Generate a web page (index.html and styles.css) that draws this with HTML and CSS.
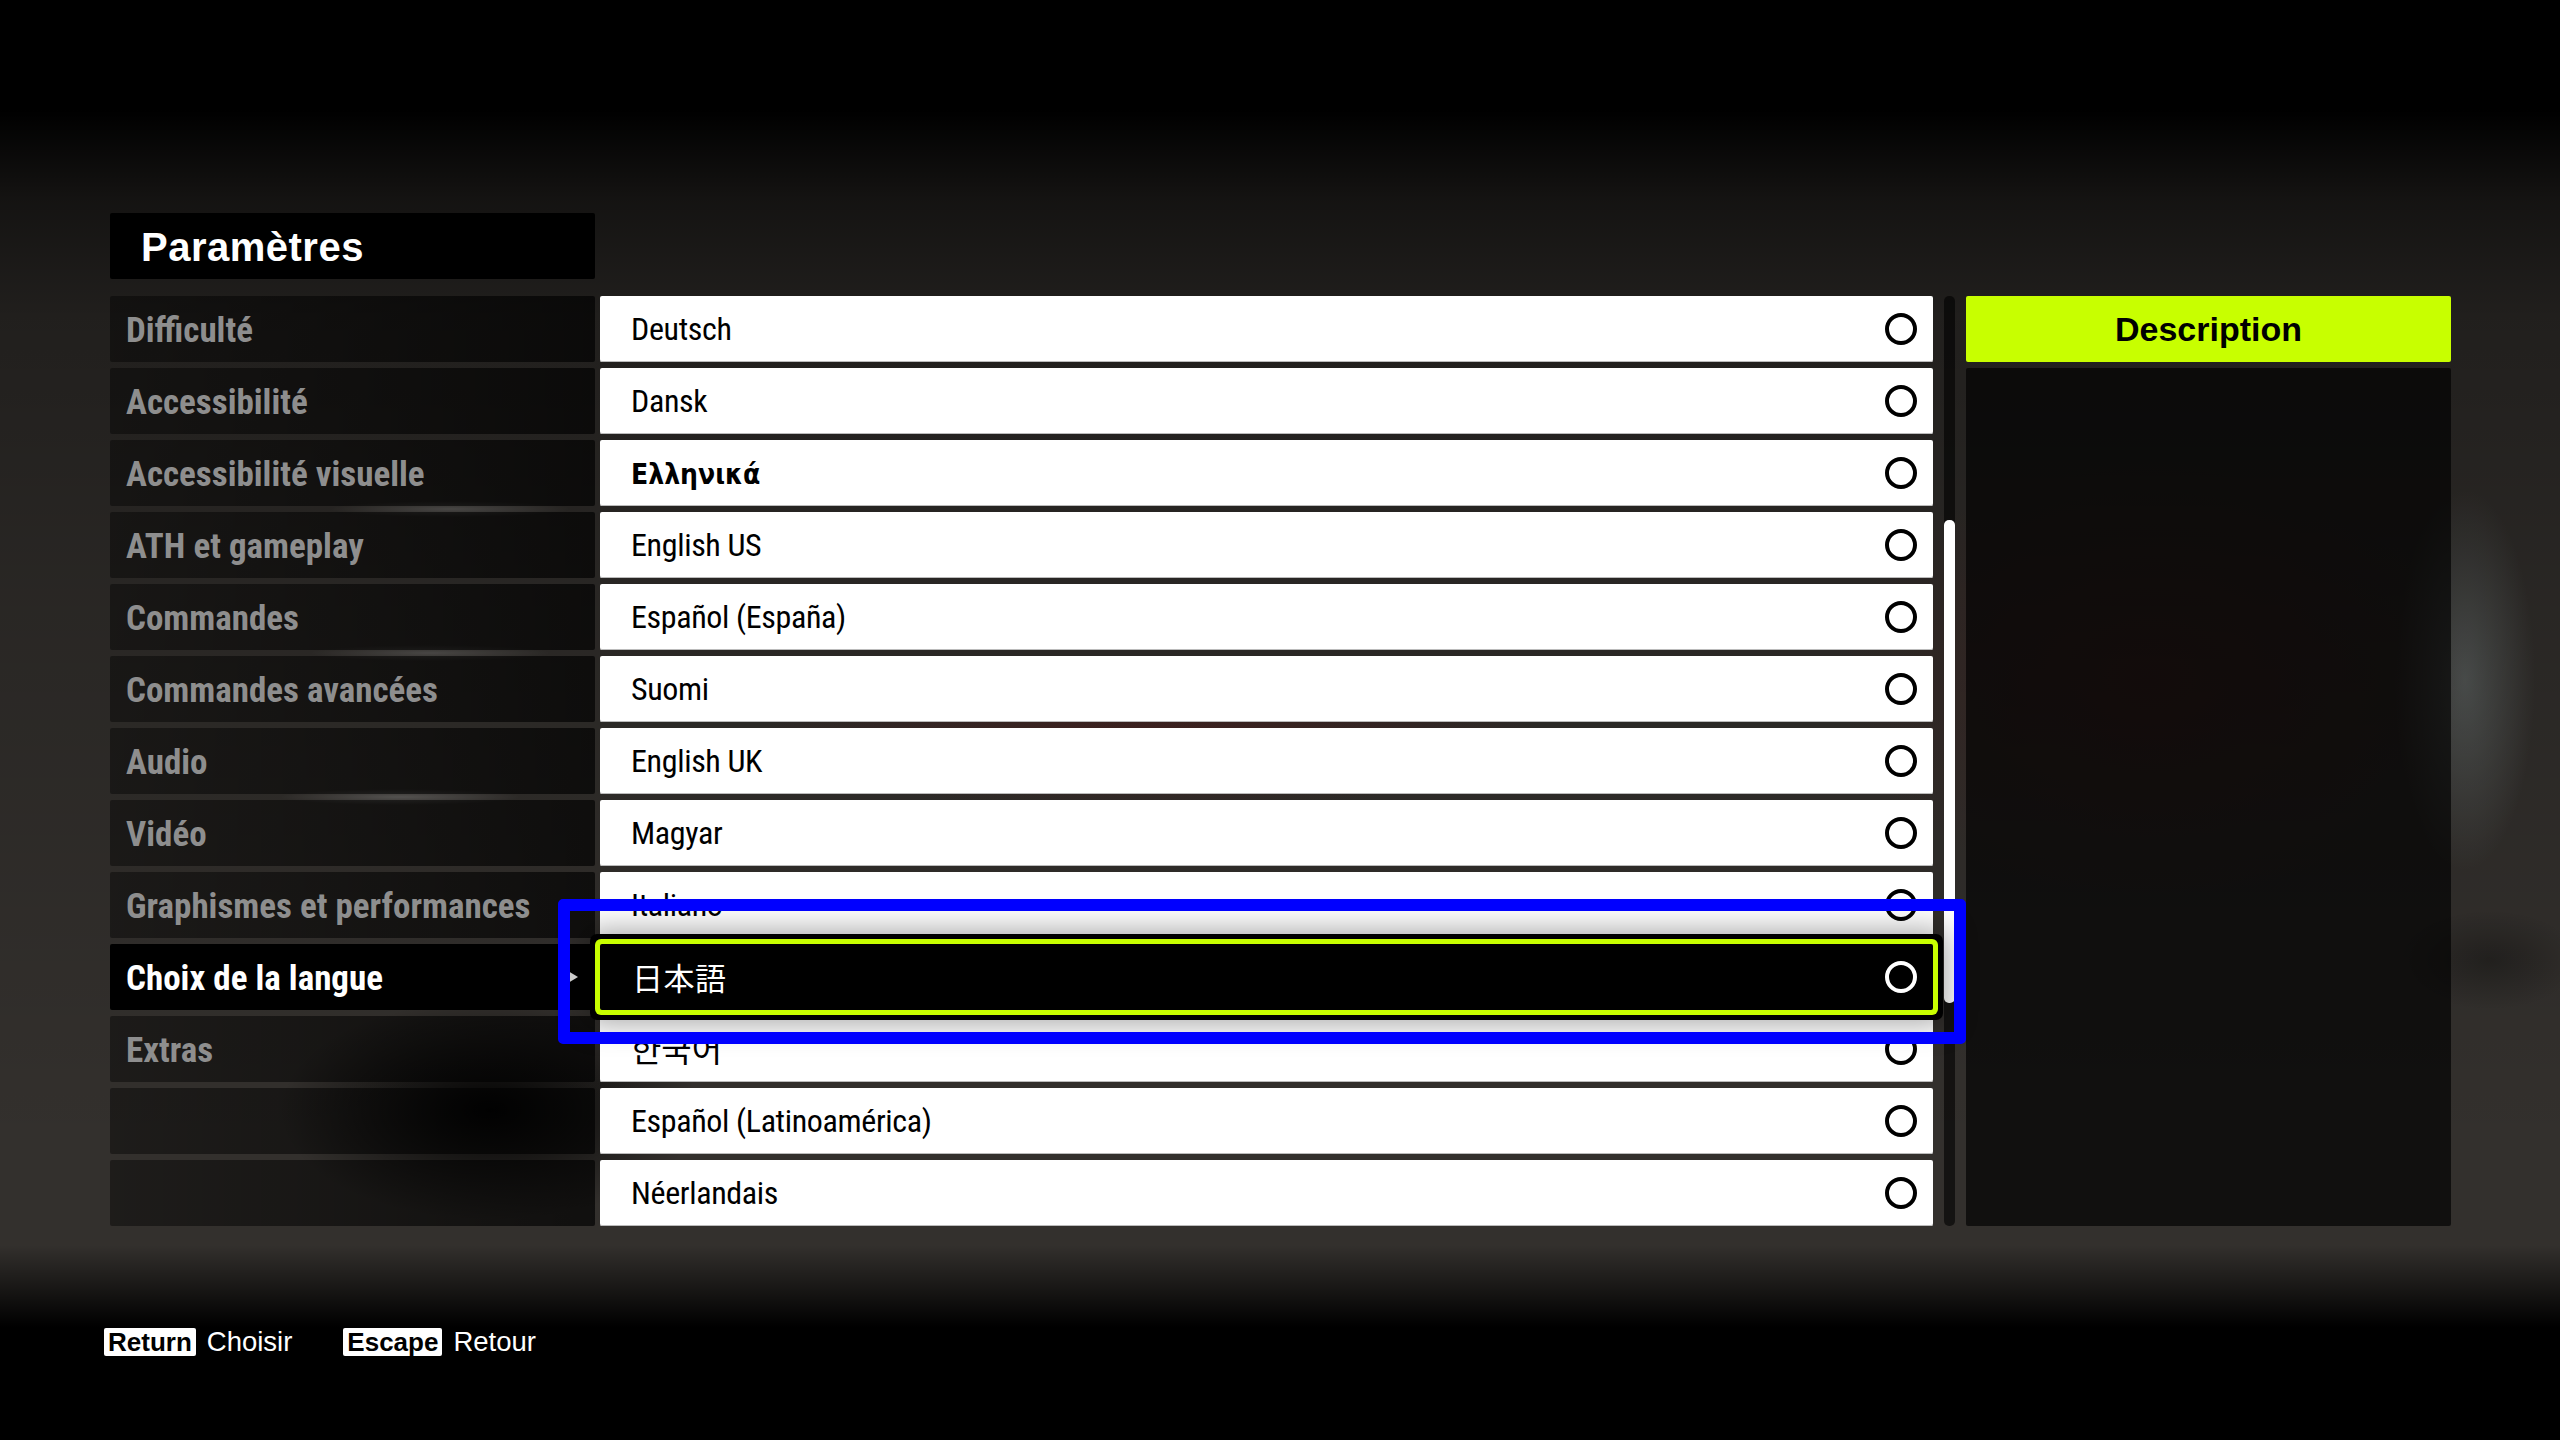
FILE: index.html
```html
<!DOCTYPE html>
<html lang="fr">
<head>
<meta charset="UTF-8">
<title>Paramètres</title>
<link rel="stylesheet" href="styles.css">
</head>
<body>

<div class="page">
    <h1 class="title">Paramètres</h1>

    <div class="columns">
        <div class="sidebar">
            <div class="side-row">Difficulté</div>
            <div class="side-row">Accessibilité</div>
            <div class="side-row">Accessibilité visuelle</div>
            <div class="side-row">ATH et gameplay</div>
            <div class="side-row">Commandes</div>
            <div class="side-row">Commandes avancées</div>
            <div class="side-row">Audio</div>
            <div class="side-row">Vidéo</div>
            <div class="side-row">Graphismes et performances</div>
            <div class="side-row active">Choix de la langue</div>
            <div class="side-row">Extras</div>
            <div class="side-row"></div>
            <div class="side-row"></div>
        </div>

        <div class="list">
            <div class="lang-row"><span>Deutsch</span><i class="radio"></i></div>
            <div class="lang-row"><span>Dansk</span><i class="radio"></i></div>
            <div class="lang-row"><span class="greek">Ελληνικά</span><i class="radio"></i></div>
            <div class="lang-row"><span>English US</span><i class="radio"></i></div>
            <div class="lang-row"><span>Español (España)</span><i class="radio"></i></div>
            <div class="lang-row"><span>Suomi</span><i class="radio"></i></div>
            <div class="lang-row"><span>English UK</span><i class="radio"></i></div>
            <div class="lang-row"><span>Magyar</span><i class="radio"></i></div>
            <div class="lang-row"><span>Italiano</span><i class="radio"></i></div>
            <div class="lang-row selected"><span class="cjk-jp">日本語</span><i class="radio"></i></div>
            <div class="lang-row"><span class="cjk-kr">한국어</span><i class="radio"></i></div>
            <div class="lang-row"><span>Español (Latinoamérica)</span><i class="radio"></i></div>
            <div class="lang-row"><span>Néerlandais</span><i class="radio"></i></div>
        </div>

        <div class="scrollbar"><div class="thumb"></div></div>

        <div class="description">
            <div class="desc-head">Description</div>
            <div class="desc-body"></div>
        </div>

        <div class="arrow"></div>
        <div class="highlight"></div>
    </div>

    <div class="footer">
        <div class="hint"><span class="key">Return</span>Choisir</div>
        <div class="hint"><span class="key">Escape</span>Retour</div>
    </div>
</div>

</body>
</html>
```

FILE: styles.css
```css
body, html {
    margin: 0;
    padding: 0;
    width: 2560px;
    height: 1440px;
    overflow: hidden;
}

body {
    font-family: "Liberation Sans", Arial, sans-serif;
    background-color: #33302d;
    background-image:
        linear-gradient(to bottom, #000 0, #000 110px, rgba(0,0,0,0.6) 200px, rgba(0,0,0,0.35) 320px, rgba(0,0,0,0.2) 600px, rgba(0,0,0,0) 1150px),
        linear-gradient(to top, #000 0, #000 113px, rgba(0,0,0,0) 195px),
        radial-gradient(ellipse 70px 190px at 2465px 680px, rgba(120,130,130,0.5), rgba(120,130,130,0) 100%),
        radial-gradient(ellipse 90px 50px at 2490px 960px, rgba(0,0,0,0.3), rgba(0,0,0,0) 100%),
        radial-gradient(ellipse 320px 220px at 2150px 680px, rgba(110,20,20,0.25), rgba(110,20,20,0) 100%),
        radial-gradient(ellipse 400px 70px at 1150px 740px, rgba(110,20,20,0.4), rgba(110,20,20,0) 100%),
        radial-gradient(ellipse 120px 8px at 450px 509px, rgba(255,255,255,0.22), rgba(255,255,255,0) 100%),
        radial-gradient(ellipse 120px 8px at 430px 653px, rgba(255,255,255,0.18), rgba(255,255,255,0) 100%),
        radial-gradient(ellipse 120px 8px at 400px 797px, rgba(255,255,255,0.22), rgba(255,255,255,0) 100%),
        radial-gradient(ellipse 210px 110px at 490px 1110px, rgba(0,0,0,0.95), rgba(0,0,0,0) 100%);
}

.page {
    padding: 213px 0 0 110px;
}

.title {
    width: 485px;
    height: 66px;
    margin: 0 0 17px 0;
    padding-left: 31px;
    box-sizing: border-box;
    background: #000;
    border-radius: 2px;
    color: #fff;
    font-size: 40px;
    letter-spacing: 0.5px;
    font-weight: bold;
    line-height: 68px;
}

.columns {
    position: relative;
    display: flex;
    height: 930px;
}

.sidebar {
    width: 485px;
    display: flex;
    flex-direction: column;
    gap: 6px;
}

.side-row {
    height: 66px;
    padding-left: 16px;
    background: linear-gradient(to right, rgba(0, 0, 0, 0.42), rgba(0, 0, 0, 0.68));
    border-radius: 2px;
    color: #8e8e8e;
    font-family: Roboto, sans-serif;
    font-stretch: 75%;
    font-size: 35px;
    font-weight: bold;
    line-height: 70px;
}

.side-row.active {
    background: #000;
    color: #fff;
}

.list {
    width: 1333px;
    margin-left: 5px;
    display: flex;
    flex-direction: column;
    gap: 6px;
}

.lang-row {
    height: 66px;
    padding: 0 16px 0 31px;
    box-sizing: border-box;
    display: flex;
    align-items: center;
    justify-content: space-between;
    background: #fff;
    border-radius: 2px;
    box-shadow: inset 0 -1px 0 #bbb;
    color: #000;
    font-family: Roboto, sans-serif;
    font-stretch: 75%;
    font-size: 32px;
    font-weight: 450;
    letter-spacing: -0.35px;
}

.lang-row.selected {
    position: relative;
    z-index: 2;
    background: #000;
    color: #fff;
    box-shadow: 0 0 0 5px #c8ff00, 0 0 0 10px #000, 0 0 30px 14px rgba(0, 0, 0, 0.35);
}

.greek {
    margin-top: 2px;
    font-family: "DejaVu Sans Condensed", "DejaVu Sans", sans-serif;
    font-size: 28px;
    font-weight: bold;
    letter-spacing: 0;
}

.cjk-jp {
    margin: -2px 0 0 1px;
    font-family: "Noto Sans CJK JP", sans-serif;
    font-size: 31px;
    font-weight: 400;
    letter-spacing: 0.5px;
}

.cjk-kr {
    margin-top: -2px;
    font-family: "Noto Sans CJK KR", sans-serif;
    font-size: 33px;
    font-weight: 400;
    letter-spacing: 0;
}

.radio {
    width: 32px;
    height: 32px;
    box-sizing: border-box;
    border: 4px solid currentColor;
    border-radius: 50%;
}

.scrollbar {
    width: 11px;
    margin-left: 11px;
    background: rgba(0, 0, 0, 0.6);
    border-radius: 5px;
    padding-top: 224px;
    box-sizing: border-box;
}

.thumb {
    height: 483px;
    background: #fff;
    border-radius: 5px;
}

.description {
    width: 485px;
    margin-left: 11px;
    display: flex;
    flex-direction: column;
    gap: 6px;
}

.desc-head {
    height: 66px;
    background: #c8ff00;
    border-radius: 2px;
    color: #000;
    font-size: 34px;
    font-weight: bold;
    line-height: 66px;
    text-align: center;
}

.desc-body {
    flex: 1;
    background: rgba(0, 0, 0, 0.66);
    border-radius: 2px;
}

.arrow {
    position: absolute;
    left: 458px;
    top: 675px;
    width: 0;
    height: 0;
    border-top: 6px solid transparent;
    border-bottom: 6px solid transparent;
    border-left: 10px solid #ccc;
    z-index: 3;
}

.highlight {
    position: absolute;
    left: 448px;
    top: 603px;
    width: 1408px;
    height: 145px;
    box-sizing: border-box;
    border: 12px solid #0000ff;
    border-radius: 5px;
    z-index: 4;
}

.footer {
    display: flex;
    gap: 51px;
    margin: 102px 0 0 -6px;
    color: #fff;
    font-size: 27.5px;
}

.hint {
    display: flex;
    align-items: center;
    gap: 11px;
    height: 28px;
}

.key {
    height: 28px;
    padding: 0 4px;
    background: #fff;
    border-radius: 2px;
    color: #000;
    font-size: 26px;
    font-weight: bold;
    line-height: 28px;
}
```
